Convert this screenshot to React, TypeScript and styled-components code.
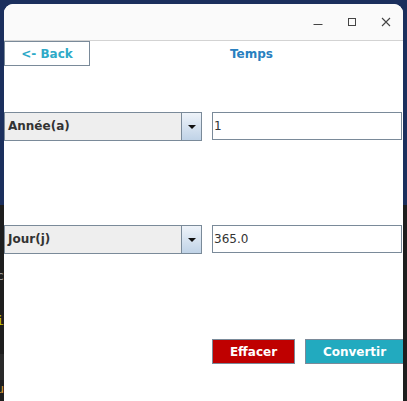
import styled, { createGlobalStyle } from "styled-components";

const GlobalStyle = createGlobalStyle`
  html, body {
    margin: 0;
    padding: 0;
    width: 407px;
    height: 401px;
    overflow: hidden;
    background: #1b2f5d;
  }
`;

const Desktop = styled.div`
  position: relative;
  width: 407px;
  height: 401px;
  overflow: hidden;
  background: #1b2f5d;
  font-family: "DejaVu Sans", "Liberation Sans", sans-serif;
`;

// terminal window sitting behind the app window
const Terminal = styled.div`
  position: absolute;
  left: -300px;
  top: 205px;
  width: 720px;
  height: 260px;
  background: #1e1e1e;
  display: flex;
  flex-direction: column;
`;

const TermLine = styled.div<{ $top: number; $bg?: string; $h?: number }>`
  margin-top: ${(p) => p.$top}px;
  height: ${(p) => p.$h || 18}px;
  width: 304px;
  text-align: right;
  font: 13px "DejaVu Sans Mono", monospace;
  line-height: 18px;
  background: ${(p) => p.$bg || "transparent"};
`;

const TermGlyph = styled.span<{ $color: string }>`
  color: ${(p) => p.$color};
`;

const Window = styled.div`
  position: absolute;
  left: 4px;
  top: 4px;
  width: 399px;
  height: 420px;
  background: #ffffff;
  border-radius: 9px 9px 0 0;
  overflow: hidden;
  display: flex;
  flex-direction: column;
`;

const TitleBar = styled.div`
  height: 36px;
  flex: none;
  background: #fafafa;
  border-bottom: 1px solid #d3d3d3;
  display: flex;
  justify-content: flex-end;
  align-items: center;
`;

const WinControl = styled.div`
  width: 34px;
  height: 36px;
  display: flex;
  align-items: center;
  justify-content: center;
`;

const Header = styled.div`
  display: grid;
  grid-template-columns: 86px 1fr;
  height: 25px;
`;

const BackButton = styled.button`
  box-sizing: border-box;
  height: 25px;
  margin: 0;
  padding: 0;
  border: 1px solid #7a8a99;
  background: #ffffff;
  color: #2eaac8;
  font: bold 12px "DejaVu Sans", sans-serif;
`;

const Title = styled.div`
  padding-left: 10px;
  text-align: center;
  color: #2880c0;
  font: bold 12px "DejaVu Sans", sans-serif;
  line-height: 26px;
`;

const Row = styled.div<{ $top: number }>`
  display: flex;
  align-items: flex-start;
  gap: 10px;
  margin-top: ${(p) => p.$top}px;
`;

const Combo = styled.div`
  box-sizing: border-box;
  width: 198px;
  height: 29px;
  border: 1px solid #7a8a99;
  background: #eeeeee;
  display: flex;
`;

const ComboLabel = styled.div`
  flex: 1;
  padding-left: 3px;
  color: #333333;
  font: bold 12px "DejaVu Sans", sans-serif;
  line-height: 27px;
`;

const ComboArrow = styled.div`
  width: 19px;
  border-left: 1px solid #7a8a99;
  background: linear-gradient(#eef3f9, #c0d3e7);
  display: flex;
  align-items: center;
  justify-content: center;

  &::after {
    content: "";
    border-left: 4px solid transparent;
    border-right: 4px solid transparent;
    border-top: 4px solid #111111;
  }
`;

const Field = styled.input`
  box-sizing: border-box;
  width: 190px;
  height: 28px;
  margin: 0;
  padding: 0 1px;
  border: 1px solid #7a8a99;
  outline: none;
  background: #ffffff;
  color: #333333;
  font: 12px "DejaVu Sans", sans-serif;
`;

const ButtonRow = styled.div`
  display: flex;
  gap: 10px;
  margin-top: 85px;
  padding-left: 208px;
`;

const ActionButton = styled.button<{ $bg: string; $w: number }>`
  box-sizing: border-box;
  flex: none;
  width: ${(p) => p.$w}px;
  height: 25px;
  margin: 0;
  padding: 0;
  border: 1px solid #7a8a99;
  background: ${(p) => p.$bg};
  color: #ffffff;
  font: bold 12px "DejaVu Sans", sans-serif;
`;

export default function App() {
  return (
    <>
      <GlobalStyle />
      <Desktop>
        <Terminal>
          <TermLine $top={62}>
            <TermGlyph $color="#9a9a9a">c</TermGlyph>
          </TermLine>
          <TermLine $top={27}>
            <TermGlyph $color="#c8c400">i</TermGlyph>
          </TermLine>
          <TermLine $top={24} $bg="#2a2a2a" $h={26} />
          <TermLine $top={0}>
            <TermGlyph $color="#d09a3a">u</TermGlyph>
          </TermLine>
        </Terminal>
        <Window>
          <TitleBar>
            <WinControl>
              <svg width="12" height="12" viewBox="0 0 12 12">
                <path d="M1.5 8.5h9" stroke="#444" strokeWidth="1" />
              </svg>
            </WinControl>
            <WinControl>
              <svg width="10" height="10" viewBox="0 0 10 10">
                <rect x="1.5" y="1.5" width="7" height="7" fill="none" stroke="#444" strokeWidth="1" />
              </svg>
            </WinControl>
            <WinControl>
              <svg width="10" height="10" viewBox="0 0 10 10">
                <path d="M1 1l8 8M9 1l-8 8" stroke="#444" strokeWidth="1.1" />
              </svg>
            </WinControl>
          </TitleBar>

          <Header>
            <BackButton>&lt;- Back</BackButton>
            <Title>Temps</Title>
          </Header>

          <Row $top={46}>
            <Combo>
              <ComboLabel>Année(a)</ComboLabel>
              <ComboArrow />
            </Combo>
            <Field defaultValue="1" />
          </Row>

          <Row $top={84}>
            <Combo>
              <ComboLabel>Jour(j)</ComboLabel>
              <ComboArrow />
            </Combo>
            <Field defaultValue="365.0" />
          </Row>

          <ButtonRow>
            <ActionButton $bg="#bf0000" $w={83}>Effacer</ActionButton>
            <ActionButton $bg="#22aabf" $w={99}>Convertir</ActionButton>
          </ButtonRow>
        </Window>
      </Desktop>
    </>
  );
}
